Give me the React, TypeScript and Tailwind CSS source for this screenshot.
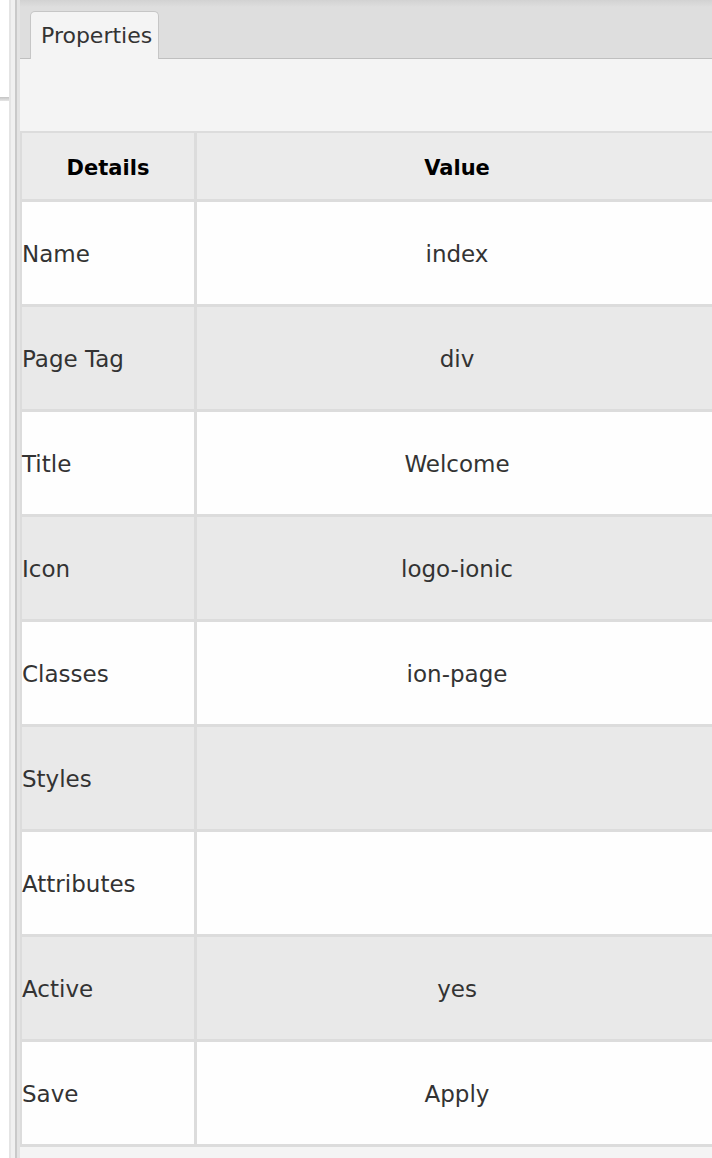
import React from 'react';

const rows: { label: string; value: string }[] = [
  { label: 'Name', value: 'index' },
  { label: 'Page Tag', value: 'div' },
  { label: 'Title', value: 'Welcome' },
  { label: 'Icon', value: 'logo-ionic' },
  { label: 'Classes', value: 'ion-page' },
  { label: 'Styles', value: '' },
  { label: 'Attributes', value: '' },
  { label: 'Active', value: 'yes' },
  { label: 'Save', value: 'Apply' },
];

export default function App() {
  return (
    <div className="w-[712px] h-[1158px] overflow-hidden flex bg-white font-['DejaVu_Sans',sans-serif]">
      {/* left splitter strip */}
      <div className="flex shrink-0 w-[20px]">
        <div className="w-[9px] pt-[97px]">
          <div className="h-[4px] bg-[linear-gradient(to_bottom,#c4c4c4,#e6e6e6)]"></div>
        </div>
        <div className="w-[2px] bg-[#e4e4e4]"></div>
        <div className="w-[4px] bg-[#f0f0f0]"></div>
        <div className="w-[2px] bg-[#c9c9c9]"></div>
        <div className="w-[3px] bg-[#e3e3e3]"></div>
      </div>

      <div className="flex-1 min-w-0 flex flex-col">
        {/* tab strip */}
        <div className="h-[59px] shrink-0 flex items-end border-b border-[#bfbfbf] bg-[linear-gradient(to_bottom,#d2d2d2,#dedede_7px)] px-[10px]">
          <div className="w-[129px] h-[48px] -mb-px bg-[#f4f4f4] border border-b-0 border-[#c6c6c6] rounded-t-[5px] flex items-center pl-[10px] text-[22px] text-[#333]">
            Properties
          </div>
        </div>

        <div className="flex-1 bg-[#f4f4f4] pt-[72px]">
          <div className="w-[697px] grid grid-cols-[172px_520px] gap-[3px] bg-[#dcdcdc] pt-[2px] pl-[2px] pb-[3px]">
            <div className="h-[66px] bg-[#ebebeb] flex items-center justify-center pt-[5px] text-[21px] font-bold text-black">
              Details
            </div>
            <div className="h-[66px] bg-[#ebebeb] flex items-center justify-center pt-[5px] text-[21px] font-bold text-black">
              Value
            </div>
            {rows.map((r, i) => {
              const bg = i % 2 === 0 ? 'bg-[#fefefe]' : 'bg-[#e9e9e9]';
              return (
                <React.Fragment key={r.label}>
                  <div className={`h-[102px] ${bg} flex items-center pt-[3px] text-[23px] text-[#333]`}>{r.label}</div>
                  <div className={`h-[102px] ${bg} flex items-center justify-center pt-[3px] text-[23px] text-[#333]`}>{r.value}</div>
                </React.Fragment>
              );
            })}
          </div>
        </div>
      </div>
    </div>
  );
}
